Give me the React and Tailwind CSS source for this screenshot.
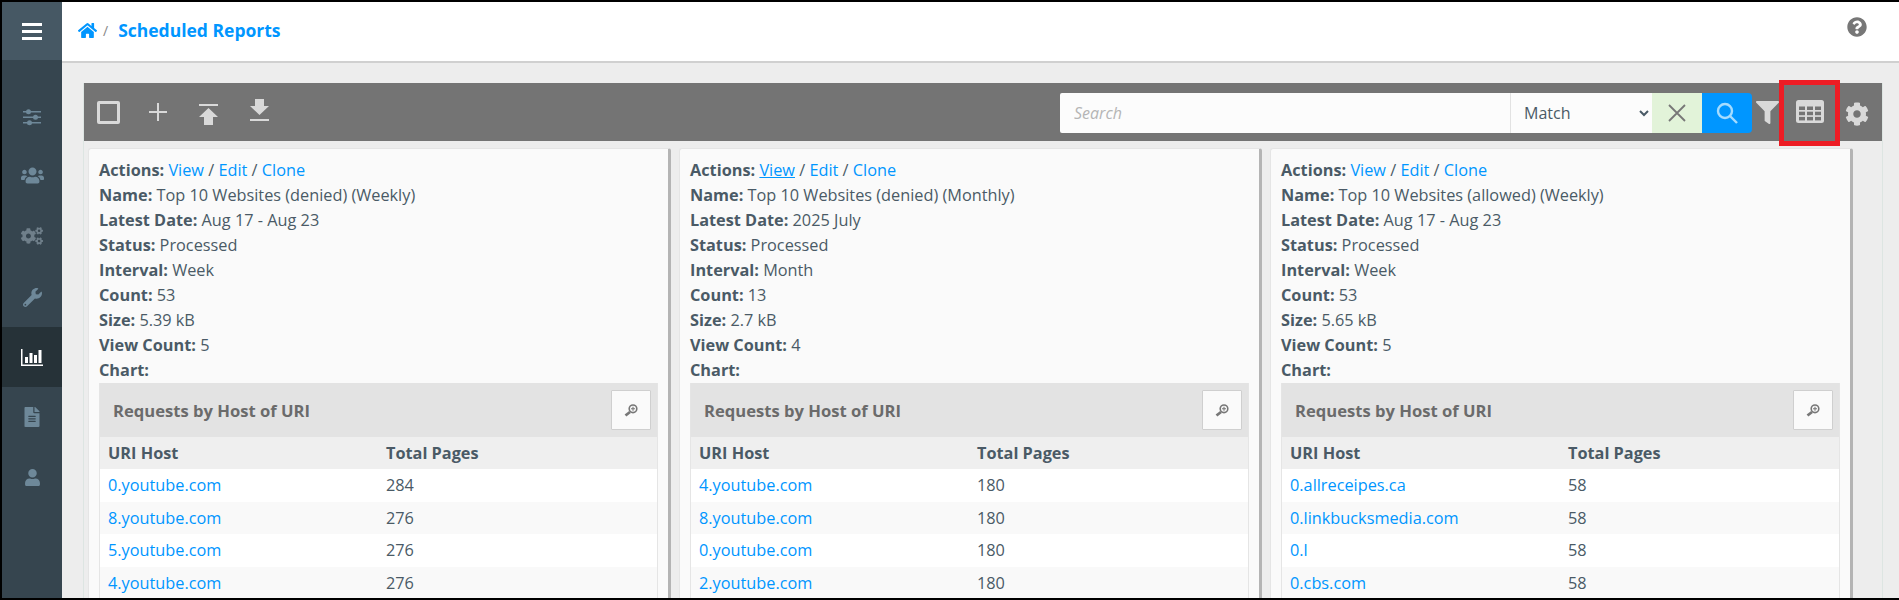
import React from 'react';
import { FaHome, FaUsers, FaCogs, FaWrench, FaFileAlt, FaUser, FaFilter, FaCog, FaQuestionCircle } from 'react-icons/fa';

const reports = [
    {
        name: 'Top 10 Websites (denied) (Weekly)', date: 'Aug 17 - Aug 23', interval: 'Week', count: '53', size: '5.39 kB', views: '5',
        rows: [['0.youtube.com', '284'], ['8.youtube.com', '276'], ['5.youtube.com', '276'], ['4.youtube.com', '276']],
    },
    {
        name: 'Top 10 Websites (denied) (Monthly)', date: '2025 July', interval: 'Month', count: '13', size: '2.7 kB', views: '4', underlineView: true,
        rows: [['4.youtube.com', '180'], ['8.youtube.com', '180'], ['0.youtube.com', '180'], ['2.youtube.com', '180']],
    },
    {
        name: 'Top 10 Websites (allowed) (Weekly)', date: 'Aug 17 - Aug 23', interval: 'Week', count: '53', size: '5.65 kB', views: '5',
        rows: [['0.allreceipes.ca', '58'], ['0.linkbucksmedia.com', '58'], ['0.l', '58'], ['0.cbs.com', '58']],
    },
];

function SlidersIcon() {
    return (
        <svg width="18" height="17" viewBox="0 0 18 17" fill="#6e8899">
            <rect x="0" y="2" width="18" height="1.500" />
            <rect x="0" y="7.500" width="18" height="1.500" />
            <rect x="0" y="13" width="18" height="1.500" />
            <circle cx="5.500" cy="2.700" r="2.500" />
            <circle cx="12.500" cy="8.200" r="2.500" />
            <circle cx="6.500" cy="13.800" r="2.500" />
        </svg>
    );
}

function BarsIcon() {
    return (
        <svg width="22" height="17" viewBox="0 0 22 17" fill="#fff">
            <rect x="0" y="0" width="1.500" height="17" />
            <rect x="0" y="15.500" width="22" height="1.500" />
            <rect x="4" y="8" width="3" height="6" />
            <rect x="8.500" y="4" width="3" height="10" />
            <rect x="13" y="6" width="3" height="8" />
            <rect x="17.500" y="1" width="3" height="13" />
        </svg>
    );
}

function UploadIcon() {
    return (
        <svg width="19" height="21" viewBox="0 0 19 21" fill="#d9d9d9">
            <rect x="0" y="0" width="19" height="2" />
            <path d="M9.500 4 L19 13 H14 V21 H5 V13 H0 Z" />
        </svg>
    );
}

function DownloadIcon() {
    return (
        <svg width="19" height="22" viewBox="0 0 19 22" fill="#d9d9d9">
            <path d="M5 0 H14 V7 H19 L9.500 16 L0 7 H5 Z" />
            <rect x="0" y="20" width="19" height="2" />
        </svg>
    );
}

function ZoomIcon() {
    return (
        <svg width="14" height="13" viewBox="0 0 14 13">
            <circle cx="9" cy="4.800" r="3.800" fill="none" stroke="#777" strokeWidth="1.600" />
            <path d="M6 8 L1.500 11.500" stroke="#777" strokeWidth="2.800" />
            <path d="M7 4.800 H11 M9 2.800 V6.800" stroke="#777" strokeWidth="1.100" />
        </svg>
    );
}

// fa-table from the old font: header bar and 3x3 cells
function TableIcon() {
    const cells = [];
    for (let r = 0; r < 3; r++) {
        for (let c = 0; c < 3; c++) {
            cells.push(<rect key={r + '-' + c} x={3 + c * 8} y={6.500 + r * 5.200} width="6" height="3.500" fill="#747474" />);
        }
    }
    return (
        <svg width="28" height="23" viewBox="0 0 28 23">
            <rect x="0" y="0" width="28" height="23" rx="2.500" fill="#d9d9d9" />
            {cells}
        </svg>
    );
}

function Sidebar() {
    const itemClass = 'flex h-[60px] items-center justify-center text-[#6e8899]';
    return (
        <div className="flex w-[60px] shrink-0 flex-col bg-[#36454f]">
            <div className="flex h-[58px] flex-col items-center justify-center gap-[4px] bg-[#465864]">
                <div className="h-[3px] w-[20px] bg-white" />
                <div className="h-[3px] w-[20px] bg-white" />
                <div className="h-[3px] w-[20px] bg-white" />
            </div>
            <div className="h-[27px]" />
            <div className={itemClass}><SlidersIcon /></div>
            <div className={itemClass}><FaUsers size={23} className="mt-[-3px]" /></div>
            <div className={itemClass}><FaCogs size={22} className="mt-[-2px] text-[#6f7f8a]" /></div>
            <div className={itemClass}><FaWrench size={19} /></div>
            <div className="flex h-[60px] items-center justify-center bg-[#263238]"><BarsIcon /></div>
            <div className={itemClass}><FaFileAlt size={20} /></div>
            <div className={itemClass}><FaUser size={17} /></div>
        </div>
    );
}

function Toolbar() {
    return (
        <div className="flex h-[58px] items-center bg-[#747474] pl-[13px] pr-[13px]">
            <div className="h-[23px] w-[23px] rounded-[2px] border-[3px] border-[#d9d9d9]" />
            <span className="ml-[29px] flex h-[18px] w-[18px] items-center justify-center">
                <svg width="18" height="18" viewBox="0 0 18 18" fill="#d9d9d9"><rect x="8" y="0" width="2" height="18" /><rect x="0" y="8" width="18" height="2" /></svg>
            </span>
            <span className="ml-[32px] mt-[4px]"><UploadIcon /></span>
            <span className="ml-[32px] mt-[-4px]"><DownloadIcon /></span>
            <div className="ml-auto mt-[2px] flex h-[40px] items-stretch">
                <input placeholder="Search" className="w-[450px] rounded-l-[2px] bg-[#fcfcfc] px-[14px] text-[16px] italic outline-none placeholder:text-[#b5b5b5]" />
                <select defaultValue="Match" className="w-[142px] border-l border-[#e2e2e2] bg-[#fcfcfc] pl-[9px] text-[16px] text-[#4a5a66] outline-none">
                    <option>Match</option>
                </select>
                <div className="flex w-[50px] items-center justify-center bg-[#e2f3d9]">
                    <svg width="20" height="20" viewBox="0 0 20 20" stroke="#777" strokeWidth="1.800"><path d="M2 2 L18 18 M18 2 L2 18" /></svg>
                </div>
                <div className="flex w-[50px] items-center justify-center rounded-r-[4px] bg-[#0096ff]">
                    <svg width="22" height="22" viewBox="0 0 22 22" fill="none" stroke="#a5dcff" strokeWidth="2.400"><circle cx="9" cy="9" r="7" /><path d="M14 14 L21 21" /></svg>
                </div>
            </div>
            <FaFilter size={23} className="ml-[4px] mt-[1px] shrink-0 text-[#d9d9d9]" />
            <div className="mt-[2px] flex h-[66px] w-[61px] shrink-0 items-center justify-center border-[5px] border-[#ed1c24] pb-[3px]">
                <TableIcon />
            </div>
            <FaCog size={24} className="ml-[5px] mt-[3px] shrink-0 text-[#d9d9d9]" />
        </div>
    );
}

function Card({ report }) {
    return (
        <div className="w-[583px] shrink-0 rounded-t-[3px] border border-[#e5e5e5] border-r-[3px] border-r-[#b4b4b4] bg-[#fafafa] px-[10px] pt-[9px] text-[16.3px] leading-[25px] text-[#4a5a66]">
            <div>
                <b className="font-bold">Actions:</b>{' '}
                <a className={report.underlineView ? 'text-[#0096ff] underline' : 'text-[#0096ff]'}>View</a> /{' '}
                <a className="text-[#0096ff]">Edit</a> / <a className="text-[#0096ff]">Clone</a>
            </div>
            <div><b className="font-bold">Name:</b> {report.name}</div>
            <div><b className="font-bold">Latest Date:</b> {report.date}</div>
            <div><b className="font-bold">Status:</b> Processed</div>
            <div><b className="font-bold">Interval:</b> {report.interval}</div>
            <div><b className="font-bold">Count:</b> {report.count}</div>
            <div><b className="font-bold">Size:</b> {report.size}</div>
            <div><b className="font-bold">View Count:</b> {report.views}</div>
            <div><b className="font-bold">Chart:</b></div>
            <div className="border-x border-[#e5e5e5]">
                <div className="flex h-[54px] items-center justify-between bg-[#e3e3e3] pl-[13px] pr-[6px]">
                    <span className="text-[16.6px] font-bold text-[#6b6b6b]">Requests by Host of URI</span>
                    <button className="flex h-[40px] w-[40px] items-center justify-center rounded-[1px] border border-[#cfcfcf] bg-[#fafafa]"><ZoomIcon /></button>
                </div>
                <div className="flex h-[32px] items-center bg-[#efefef] px-[8px] font-bold">
                    <span className="w-[278px]">URI Host</span>
                    <span>Total Pages</span>
                </div>
                {report.rows.map((row, i) => (
                    <div key={row[0]} className={i % 2 === 0 ? 'flex h-[33px] items-center bg-white px-[8px]' : 'flex h-[32px] items-center bg-[#f9f9f9] px-[8px]'}>
                        <a className="w-[278px] text-[#0096ff]">{row[0]}</a>
                        <span>{row[1]}</span>
                    </div>
                ))}
            </div>
        </div>
    );
}

export default function App() {
    return (
        <div className="flex h-[600px] w-[1899px] overflow-hidden border-b-2 border-l-2 border-t-2 border-black font-['Open_Sans',sans-serif]">
            <Sidebar />
            <div className="flex min-w-0 flex-1 flex-col bg-[#ededed]">
                <div className="flex h-[61px] shrink-0 items-center justify-between border-b-2 border-[#d0d0d0] bg-white pb-[2px] pl-[16px] pr-[32px]">
                    <div className="flex items-center">
                        <FaHome size={19} className="text-[#0096ff]" />
                        <span className="ml-[6px] mr-[10px] text-[14px] text-[#888]">/</span>
                        <span className="text-[17.500px] font-bold text-[#0096ff]">Scheduled Reports</span>
                    </div>
                    <FaQuestionCircle size={20} className="mt-[-8px] text-[#777]" />
                </div>
                <div className="ml-[21px] mr-[16px] mt-[20px] flex-1 border-x border-[#dde5e2]">
                    <Toolbar />
                    <div className="flex gap-[8px] pl-[4px] pt-[7px]">
                        {reports.map((r) => <Card key={r.name} report={r} />)}
                    </div>
                </div>
            </div>
        </div>
    );
}
